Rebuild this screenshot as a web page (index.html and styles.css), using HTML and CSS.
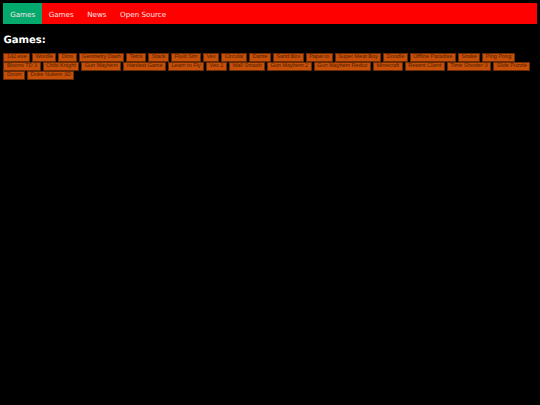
FILE: index.html
```html
<!DOCTYPE html>
<html>
<head>
    <meta charset="UTF-8">
    <title>Games</title>
    <link rel="stylesheet" href="styles.css">
</head>
<body>
<ul class="nav">
    <li class="on">Games</li>
    <li>Games</li>
    <li>News</li>
    <li>Open Source</li>
</ul>
<h2>Games:</h2>
<div class="games">
    <button>142.exe</button>
    <button>Wordle</button>
    <button>Dino</button>
    <button>Geometry Dash</button>
    <button>Tetris</button>
    <button>Stack</button>
    <button>Fluid Sim</button>
    <button>Vex</button>
    <button>Circular</button>
    <button>Dante</button>
    <button>Sand:Box</button>
    <button>Paper.io</button>
    <button>Super Meat Boy</button>
    <button>Doodle</button>
    <button>Offline Paradise</button>
    <button>Snake</button>
    <button>Ping Pong</button>
    <button>Bloons TD 3</button>
    <button>Chibi Knight</button>
    <button>Gun Mayhem</button>
    <button>Hardest Game</button>
    <button>Learn to Fly</button>
    <button>Vex 2</button>
    <button>Wall Smash</button>
    <button>Gun Mayhem 2</button>
    <button>Gun Mayhem Redux</button>
    <button>Minecraft</button>
    <button>Resent Client</button>
    <button>Time Shooter 3</button>
    <button>Slide Puzzle</button>
    <button>Doom</button>
    <button>Duke Nukem 3D</button>
</div>
</body>
</html>
```
FILE: styles.css
```css
body{
    margin: 3.4px;
    background: #000;
    color: #fff;
    font-family: "DejaVu Sans",sans-serif;
    text-rendering: geometricPrecision;
}
.nav{
    display: flex;
    margin: 0;
    padding: 0;
    list-style: none;
    background: #f00;
}
.nav li{
    padding: 2.5px 6.75px 0;
    height: 18px;
    line-height: 18px;
    font-size: 7.17px;
    color: #ffe6e6;
}
.nav li.on{
    background: #04aa6d;
}
h2{
    margin: 11px 0 6.5px;
    font-size: 10.1px;
    line-height: 12px;
}
.games{
    display: flex;
    flex-wrap: wrap;
    column-gap: 2px;
}
.games button{
    height: 9px;
    margin: 0;
    padding: 0 2.5px;
    border: 0.85px solid #6a2c06;
    box-sizing: border-box;
    background: #c84f08;
    color: #4a2000;
    font-family: "Liberation Sans",sans-serif;
    font-size: 5.5px;
    line-height: 7px;
    text-rendering: geometricPrecision;
}
```
